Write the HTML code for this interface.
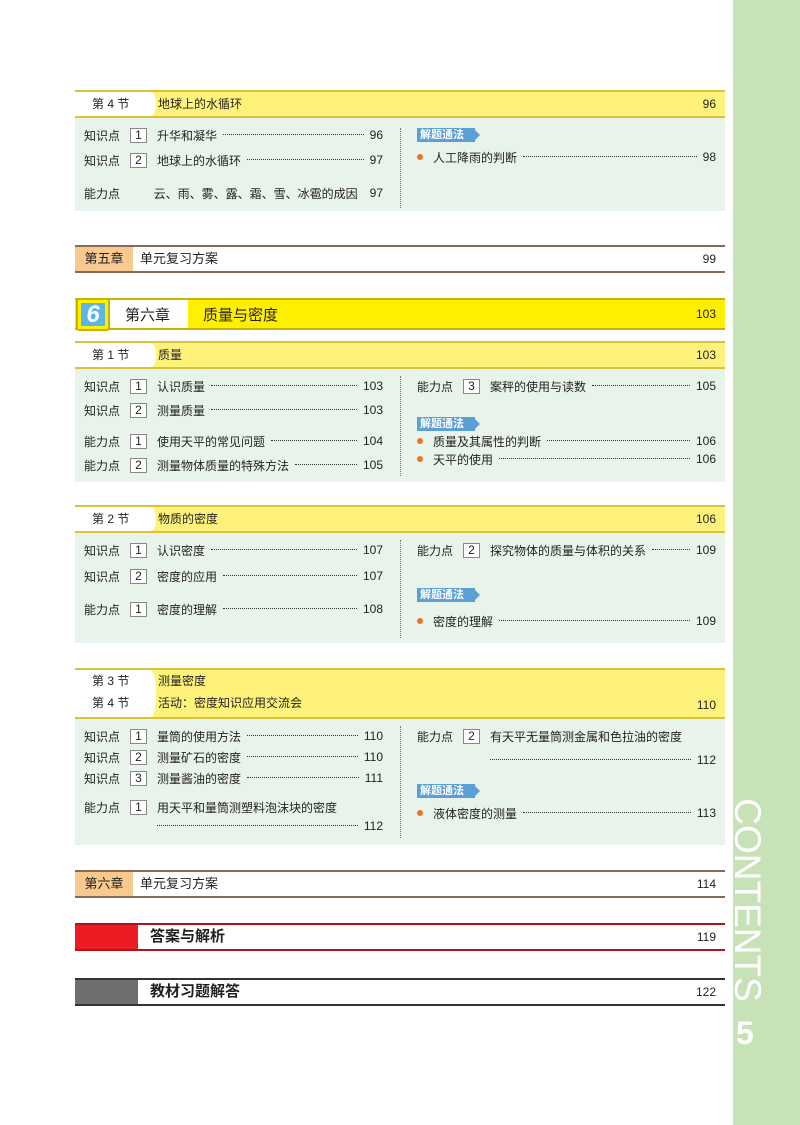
<!DOCTYPE html><html><head><meta charset="utf-8"><style>
*{margin:0;padding:0;box-sizing:border-box}
body{width:800px;height:1125px;background:#fff;position:relative;overflow:hidden;font-family:"Liberation Sans","Noto Sans CJK SC",sans-serif;color:#231f20;font-size:12px}
.a{position:absolute}
.side{left:733px;top:0;width:67px;height:1125px;background:#c8e2b7}
.bar{position:absolute;left:75px;width:650px;height:28px;background:#fff27a;border-top:2px solid #d8c43a;border-bottom:2px solid #d8c43a}
.bar .l{position:absolute;left:0;top:0;bottom:0;width:75px;background:#fff;line-height:24px;padding-left:17px}
.bar .l:after{content:"";position:absolute;right:-6px;top:0;bottom:0;width:10px;background:#fff;border-radius:0 50% 50% 0}
.bar .t{position:absolute;left:83px;line-height:24px}
.bar .p{position:absolute;right:9px;line-height:24px}
.box{position:absolute;left:75px;width:650px;background:#e8f3ea}
.vd{position:absolute;left:400px;border-left:1px dotted #777}
.r{position:absolute;display:flex;align-items:center;height:16px;white-space:nowrap}
.r .k{width:46px}
.r .n{width:17px;height:15px;border:1px solid #888;background:#fff;text-align:center;line-height:13px;margin-right:10px;font-size:12px}
.r .d{flex:1;border-bottom:1.5px dotted #333;margin:0 6px;height:8px;align-self:flex-start}
.tag{position:absolute;width:58px;height:14px;background:#5a9fd6;color:#fff;font-size:11px;font-weight:bold;line-height:14px;padding-left:3px}
.tag:after{content:"";position:absolute;right:-5px;top:2px;border-left:5px solid #5a9fd6;border-top:5px solid transparent;border-bottom:5px solid transparent}
.dot{display:inline-block;width:6px;height:6px;border-radius:50%;background:#e87722;margin:0 10px 0 2px}
.cb{position:absolute;left:75px;width:650px;height:28px;border-top:2px solid #8b6a4f;border-bottom:2px solid #8b6a4f}
.cb .l{position:absolute;left:0;top:0;bottom:0;width:58px;line-height:24px;text-align:center;font-size:13px}
.cb .t{position:absolute;left:65px;line-height:24px;font-size:13px}
.cb .p{position:absolute;right:9px;line-height:24px}
</style></head><body>
<div class="a side"></div>
<div class="a" style="top:880px;height:40px;transform:rotate(90deg);transform-origin:center;color:#fff;font-size:37px;line-height:40px;text-align:center;width:210px;left:642px;">CONTENTS</div>
<div class="a" style="left:736px;top:1015px;color:#fff;font-size:32px;font-weight:bold">5</div>

<div class="bar" style="top:90px"><div class="l">第 4 节</div><div class="t">地球上的水循环</div><div class="p">96</div></div>
<div class="box" style="top:118px;height:93px"></div>
<div class="vd" style="top:128px;height:80px"></div>
<div class="r" style="left:84px;top:127px;width:299px"><span class="k">知识点</span><span class="n">1</span>升华和凝华<span class="d"></span>96</div>
<div class="r" style="left:84px;top:152px;width:299px"><span class="k">知识点</span><span class="n">2</span>地球上的水循环<span class="d"></span>97</div>
<div class="r" style="left:84px;top:185px;width:299px"><span class="k" style="width:73px">能力点</span>云、雨、雾、露、霜、雪、冰雹的成因<span class="d"></span>97</div>
<div class="tag" style="left:417px;top:128px">解题通法</div>
<div class="r" style="left:415px;top:149px;width:301px"><span class="dot"></span>人工降雨的判断<span class="d"></span>98</div>

<div class="cb" style="top:245px"><div class="l" style="background:#f9c98f">第五章</div><div class="t">单元复习方案</div><div class="p">99</div></div>

<div class="a" style="left:75px;top:298px;width:650px;height:32px;background:#fff000;border-top:2px solid #c8b400;border-bottom:2px solid #c8b400"></div>
<div class="a" style="left:110px;top:300px;width:78px;height:28px;background:#fff"></div>
<div class="a" style="left:76px;top:298px;width:34px;height:33px;background:#fff000;border:2px solid #c8b400;border-radius:3px"><div style="margin:3px;width:24px;height:23px;background:#5bb5e6;color:#fff;font-weight:bold;font-style:italic;font-size:24px;line-height:23px;text-align:center">6</div></div>
<div class="a" style="left:125px;top:304px;font-size:15px">第六章</div>
<div class="a" style="left:203px;top:304px;font-size:15px">质量与密度</div>
<div class="a" style="right:84px;top:307px">103</div>

<div class="bar" style="top:341px"><div class="l">第 1 节</div><div class="t">质量</div><div class="p">103</div></div>
<div class="box" style="top:369px;height:113px"></div>
<div class="vd" style="top:376px;height:100px"></div>
<div class="r" style="left:84px;top:378px;width:299px"><span class="k">知识点</span><span class="n">1</span>认识质量<span class="d"></span>103</div>
<div class="r" style="left:84px;top:402px;width:299px"><span class="k">知识点</span><span class="n">2</span>测量质量<span class="d"></span>103</div>
<div class="r" style="left:84px;top:433px;width:299px"><span class="k">能力点</span><span class="n">1</span>使用天平的常见问题<span class="d"></span>104</div>
<div class="r" style="left:84px;top:457px;width:299px"><span class="k">能力点</span><span class="n">2</span>测量物体质量的特殊方法<span class="d"></span>105</div>
<div class="r" style="left:417px;top:378px;width:299px"><span class="k">能力点</span><span class="n">3</span>案秤的使用与读数<span class="d"></span>105</div>
<div class="tag" style="left:417px;top:417px">解题通法</div>
<div class="r" style="left:415px;top:433px;width:301px"><span class="dot"></span>质量及其属性的判断<span class="d"></span>106</div>
<div class="r" style="left:415px;top:451px;width:301px"><span class="dot"></span>天平的使用<span class="d"></span>106</div>

<div class="bar" style="top:505px"><div class="l">第 2 节</div><div class="t">物质的密度</div><div class="p">106</div></div>
<div class="box" style="top:533px;height:110px"></div>
<div class="vd" style="top:540px;height:98px"></div>
<div class="r" style="left:84px;top:542px;width:299px"><span class="k">知识点</span><span class="n">1</span>认识密度<span class="d"></span>107</div>
<div class="r" style="left:84px;top:568px;width:299px"><span class="k">知识点</span><span class="n">2</span>密度的应用<span class="d"></span>107</div>
<div class="r" style="left:84px;top:601px;width:299px"><span class="k">能力点</span><span class="n">1</span>密度的理解<span class="d"></span>108</div>
<div class="r" style="left:417px;top:542px;width:299px"><span class="k">能力点</span><span class="n">2</span>探究物体的质量与体积的关系<span class="d"></span>109</div>
<div class="tag" style="left:417px;top:588px">解题通法</div>
<div class="r" style="left:415px;top:613px;width:301px"><span class="dot"></span>密度的理解<span class="d"></span>109</div>

<div class="bar" style="top:668px;height:51px"><div class="l" style="line-height:22px">第 3 节<br>第 4 节</div><div class="t" style="line-height:22px">测量密度<br>活动：密度知识应用交流会</div><div class="p" style="top:24px;line-height:22px">110</div></div>
<div class="box" style="top:719px;height:126px"></div>
<div class="vd" style="top:726px;height:112px"></div>
<div class="r" style="left:84px;top:728px;width:299px"><span class="k">知识点</span><span class="n">1</span>量筒的使用方法<span class="d"></span>110</div>
<div class="r" style="left:84px;top:749px;width:299px"><span class="k">知识点</span><span class="n">2</span>测量矿石的密度<span class="d"></span>110</div>
<div class="r" style="left:84px;top:770px;width:299px"><span class="k">知识点</span><span class="n">3</span>测量酱油的密度<span class="d"></span>111</div>
<div class="r" style="left:84px;top:799px;width:299px"><span class="k">能力点</span><span class="n">1</span>用天平和量筒测塑料泡沫块的密度</div>
<div class="r" style="left:157px;top:818px;width:226px"><span class="d" style="margin-left:0"></span>112</div>
<div class="r" style="left:417px;top:728px;width:299px"><span class="k">能力点</span><span class="n">2</span>有天平无量筒测金属和色拉油的密度</div>
<div class="r" style="left:490px;top:752px;width:226px"><span class="d" style="margin-left:0"></span>112</div>
<div class="tag" style="left:417px;top:784px">解题通法</div>
<div class="r" style="left:415px;top:805px;width:301px"><span class="dot"></span>液体密度的测量<span class="d"></span>113</div>

<div class="cb" style="top:870px"><div class="l" style="background:#f9c98f">第六章</div><div class="t">单元复习方案</div><div class="p">114</div></div>
<div class="cb" style="top:923px;border-color:#b0151c"><div class="l" style="background:#ed1c24;width:63px"></div><div class="t" style="left:75px;font-size:15px;font-weight:bold">答案与解析</div><div class="p">119</div></div>
<div class="cb" style="top:978px;border-color:#333"><div class="l" style="background:#6d6e70;width:63px"></div><div class="t" style="left:75px;font-size:15px;font-weight:bold">教材习题解答</div><div class="p">122</div></div>
</body></html>
